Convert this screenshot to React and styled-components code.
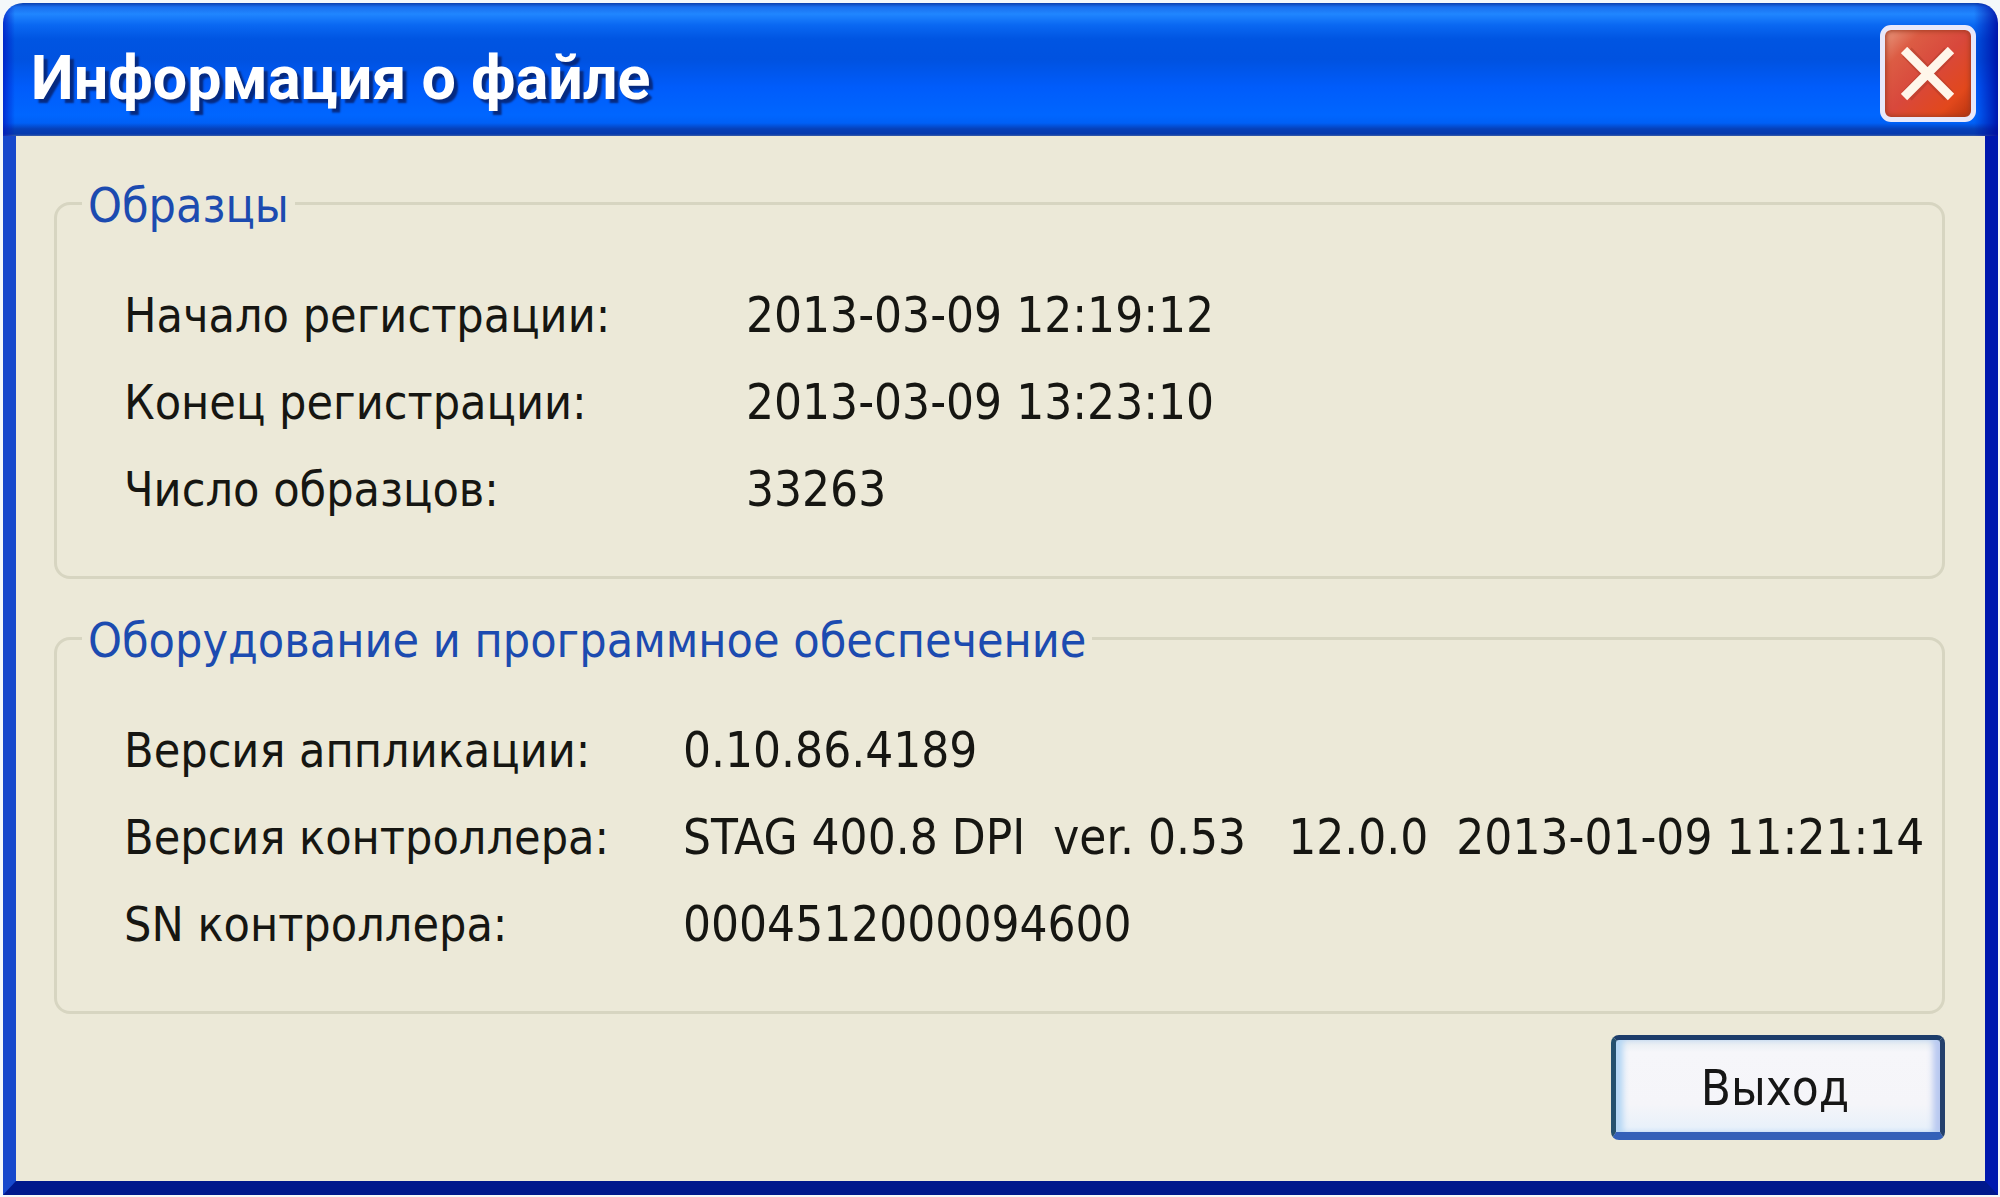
import React from 'react';
import styled, { createGlobalStyle } from 'styled-components';

const GlobalStyle = createGlobalStyle`
  *, *::before, *::after { box-sizing: border-box; }
  body { margin: 0; background: #f4f8fa; }
`;

const uiFont = '"DejaVu Sans Condensed", "DejaVu Sans", sans-serif';

const Desktop = styled.div`
  display: flex;
  min-height: 100vh;
  padding: 3px 2px 2px 3px;
  font-family: ${uiFont};
`;

const Window = styled.main`
  flex: 1;
  display: flex;
  flex-direction: column;
  min-width: 0;
`;

const TitleBar = styled.header`
  display: flex;
  align-items: center;
  justify-content: space-between;
  height: 133px;
  padding: 8px 22px 0 28px;
  border-radius: 20px 20px 0 0;
  background:
    linear-gradient(90deg, rgba(0, 20, 190, 0.7) 0, rgba(0, 20, 190, 0) 12px calc(100% - 24px), rgba(0, 10, 160, 0.85) 100%),
    linear-gradient(180deg, #0a3fae 0, #1a6fee 4px, #2086ff 11px, #0a68f2 22px, #0055e2 36px, #0052e0 56px, #005cfb 84px, #0066ff 112px, #0060f6 120px, #0640b8 126px, #063aae 131px, #3a5da8 133px);
`;

const Title = styled.h1`
  margin: 0;
  padding-top: 8px;
  color: #fff;
  font: bold 61px/80px Roboto, sans-serif;
  text-shadow: 4px 4px 2px #062a80;
`;

const CloseButton = styled.button`
  display: flex;
  align-items: center;
  justify-content: center;
  width: 96px;
  height: 97px;
  padding: 0;
  border: 5px solid #e8e8fa;
  border-radius: 11px;
  background: linear-gradient(135deg, #e89a80 0, #dc5c44 22%, #d8483c 50%, #e2481c 80%, #b83410 100%);
  box-shadow: inset 0 0 5px 1px #a03a20;
`;

const Body = styled.div`
  flex: 1;
  display: flex;
  flex-direction: column;
  padding: 41px 40px 40px 38px;
  border: solid;
  border-width: 0 13px 14px 13px;
  border-color: #0018a8 #0018ae #00188c #1648cc;
  background: #ece9d8;
`;

const Groups = styled.div`
  display: grid;
  gap: 33px;
`;

const Group = styled.fieldset`
  min-width: 0;
  margin: 0;
  padding: 43px 0 43px 67px;
  border: 3px solid #d7d5c1;
  border-radius: 16px;
`;

const Legend = styled.legend`
  margin-left: -42px;
  padding: 4px 6px 0;
  color: #1c4bb0;
  font-size: 48px;
  line-height: 48px;
`;

const Fields = styled.dl`
  display: grid;
  grid-template-columns: ${({ $labelWidth }) => $labelWidth}px 1fr;
  margin: 0;
  line-height: 87px;
  white-space: pre;
  color: #161612;
`;

const Label = styled.dt`
  font-size: 48px;
`;

const Value = styled.dd`
  margin: 0;
  font-size: 49px;
`;

const Actions = styled.footer`
  display: flex;
  justify-content: flex-end;
  margin-top: 21px;
`;

const ExitButton = styled.button`
  width: 334px;
  height: 105px;
  padding: 6px 6px 0 0;
  border: solid;
  border-width: 5px 5px 8px;
  border-color: #1c3c6a #24406c #3460b8 #24506e;
  border-radius: 8px;
  background: linear-gradient(180deg, #e4ebf0 0, #f6f6fa 12px, #f5f5f9 70%, #e6f0fa 100%);
  box-shadow: inset 9px 0 6px -2px #b4d6f4, inset -9px 0 6px -2px #b8c8f0;
  color: #161616;
  font: 49px/60px ${uiFont};
`;

const sections = [
  {
    title: 'Образцы',
    labelWidth: 622,
    rows: [
      ['Начало регистрации:', '2013-03-09 12:19:12'],
      ['Конец регистрации:', '2013-03-09 13:23:10'],
      ['Число образцов:', '33263'],
    ],
  },
  {
    title: 'Оборудование и программное обеспечение',
    labelWidth: 559,
    rows: [
      ['Версия аппликации:', '0.10.86.4189'],
      ['Версия контроллера:', 'STAG 400.8 DPI  ver. 0.53   12.0.0  2013-01-09 11:21:14'],
      ['SN контроллера:', '0004512000094600'],
    ],
  },
];

function CloseIcon() {
  return (
    <svg width="54" height="54" viewBox="0 0 54 54" fill="none" aria-hidden="true">
      <path d="M6 5 48 49M48 5 6 49" stroke="#a83a28" strokeWidth="13" opacity=".45" />
      <path d="M3 3 50 50M50 3 3 50" stroke="#fff6ea" strokeWidth="9" />
    </svg>
  );
}

export default function App() {
  return (
    <Desktop>
      <GlobalStyle />
      <Window>
        <TitleBar>
          <Title>Информация о файле</Title>
          <CloseButton type="button" aria-label="Закрыть">
            <CloseIcon />
          </CloseButton>
        </TitleBar>
        <Body>
          <Groups>
            {sections.map(({ title, labelWidth, rows }) => (
              <Group key={title}>
                <Legend>{title}</Legend>
                <Fields $labelWidth={labelWidth}>
                  {rows.map(([label, value]) => (
                    <React.Fragment key={label}>
                      <Label>{label}</Label>
                      <Value>{value}</Value>
                    </React.Fragment>
                  ))}
                </Fields>
              </Group>
            ))}
          </Groups>
          <Actions>
            <ExitButton type="button">Выход</ExitButton>
          </Actions>
        </Body>
      </Window>
    </Desktop>
  );
}
